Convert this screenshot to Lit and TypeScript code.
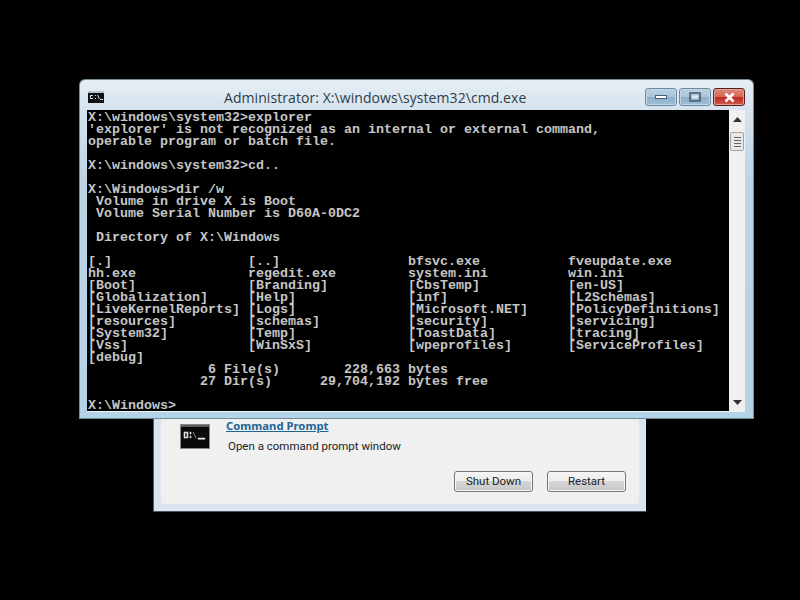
import { LitElement, html, css } from "lit";
import { customElement } from "lit/decorators.js";

const CONSOLE = `X:\\windows\\system32>explorer
'explorer' is not recognized as an internal or external command,
operable program or batch file.

X:\\windows\\system32>cd..

X:\\Windows>dir /w
 Volume in drive X is Boot
 Volume Serial Number is D60A-0DC2

 Directory of X:\\Windows

[.]                 [..]                bfsvc.exe           fveupdate.exe
hh.exe              regedit.exe         system.ini          win.ini
[Boot]              [Branding]          [CbsTemp]           [en-US]
[Globalization]     [Help]              [inf]               [L2Schemas]
[LiveKernelReports] [Logs]              [Microsoft.NET]     [PolicyDefinitions]
[resources]         [schemas]           [security]          [servicing]
[System32]          [Temp]              [ToastData]         [tracing]
[Vss]               [WinSxS]            [wpeprofiles]       [ServiceProfiles]
[debug]
               6 File(s)        228,663 bytes
              27 Dir(s)      29,704,192 bytes free

X:\\Windows>`;

@customElement("app-root")
export class AppRoot extends LitElement {
  static styles = css`
    :host { display: block; position: relative; width: 800px; height: 600px; background: #000; overflow: hidden; }
    .dialog {
      position: absolute; left: 153px; top: 412px; width: 493px; height: 100px; box-sizing: border-box;
      background: #dbe5f1; padding: 0 7px 7px 7px; display: flex;
      border-left: 1px solid #5a6066; border-bottom: 1px solid #4f5459;
    }
    .dialog-body {
      flex: 1; background: #f0f0f0; border-radius: 0 0 3px 3px; display: flex; flex-direction: column;
      padding: 7px 13px 0 19px;
    }
    .row { display: flex; gap: 16px; }
    .pic { margin-top: 5px; flex: none; }
    .link { font: bold 11.3px/14px "Noto Sans", sans-serif; color: #1f6496; text-decoration: underline; }
    .desc { font: 11.5px/14px Roboto, sans-serif; color: #1c1c1c; margin: 6px 0 0 2px; }
    .btns { display: flex; justify-content: flex-end; gap: 14px; margin-top: 18px; }
    .btn {
      width: 79px; height: 21px; box-sizing: border-box; border: 1px solid #777; border-radius: 3px;
      background: linear-gradient(#f4f4f4 0, #ededed 45%, #d6d6d6 50%, #c8c8c8 100%);
      font: 11.5px/19px Roboto, sans-serif; color: #222; text-align: center; box-shadow: inset 0 0 0 1px #f6f6f6;
    }
    .win {
      position: absolute; left: 79px; top: 79px; width: 675px; height: 340px; box-sizing: border-box;
      border-radius: 6px 6px 0 0; border: 1px solid #7b8c99; border-bottom-color: #6c8c9c;
      background: linear-gradient(#e6eef4 0, #d3e2ee 10%, #bdd3e4 30%, #b5d3e6 100%);
      padding: 0 8px 6px 7px; display: flex; flex-direction: column;
    }
    .title { height: 30px; flex: none; display: flex; align-items: flex-start; position: relative; }
    .ticon { margin: 11px 0 0 1px; }
    .ttext {
      position: absolute; left: 137px; top: 8px; font: 14px/20px "Open Sans", sans-serif;
      letter-spacing: 0.07px; color: #2f3c48; white-space: nowrap;
    }
    .caps { position: absolute; right: 0; top: 8px; display: flex; gap: 2px; }
    .cap {
      height: 18px; width: 32px; box-sizing: border-box; border: 1px solid #6c8aa5; border-radius: 3px; display: flex;
      align-items: center; justify-content: center; box-shadow: inset 0 0 0 1px #c4d6e4;
      background: linear-gradient(#b9d0e2 0, #a9c4d9 48%, #8fafc8 52%, #a0bfd6 100%);
    }
    .close { border-color: #5a2020; box-shadow: inset 0 0 0 1px #e0a098; background: linear-gradient(#e08878 0, #d5675a 48%, #bf2a20 52%, #cf5a48 100%); }
    .client { flex: 1; display: flex; min-height: 0; border-bottom: 1px solid #eef5fa; }
    .term {
      flex: 1; margin: 0; background: #000; color: #c6c6c6; white-space: pre;
      font: bold 13.33px/12px "Liberation Mono", monospace; padding: 2px 0 0 1px; height: 100%; box-sizing: border-box;
    }
    .sb { width: 16px; flex: none; background: #f0f0f0; display: flex; flex-direction: column; align-items: center; }
    .arrow { height: 17px; width: 16px; flex: none; display: flex; align-items: center; justify-content: center; }
    .arrow.up { margin-top: 1px; }
    .thumb {
      width: 14px; height: 19px; margin-top: 4px; box-sizing: border-box; border: 1px solid #a4a4a4; border-radius: 2px;
      background: #e8e8e8; display: flex; flex-direction: column; align-items: center; justify-content: center; gap: 2px;
    }
    .thumb i { display: block; width: 7px; height: 1px; background: #666; }
    .track { flex: 1; }
  `;

  render() {
    return html`
      <div class="dialog">
        <div class="dialog-body">
          <div class="row">
            <svg class="pic" width="30" height="25" viewBox="0 0 30 25">
              <rect x="0.5" y="0.5" width="29" height="24" fill="#0a0a0a" stroke="#8a8a8a"/>
              <rect x="1" y="1" width="28" height="2" fill="#5a5a5a"/>
              <path d="M4 8h4v1H4zM4 9v4h1V9zM4 13h4v1H4zM7 9h1v4H7zM10 8h1v2h-1zM10 12h1v2h-1zM13 8l3 6M18 14h7v1.2h-7z" stroke="#ddd" stroke-width="0.6" fill="#ddd"/>
            </svg>
            <div>
              <div class="link">Command Prompt</div>
              <div class="desc">Open a command prompt window</div>
            </div>
          </div>
          <div class="btns">
            <div class="btn">Shut Down</div>
            <div class="btn">Restart</div>
          </div>
        </div>
      </div>
      <div class="win">
        <div class="title">
          <svg class="ticon" width="16" height="12" viewBox="0 0 16 12">
            <rect width="16" height="12" fill="#111"/>
            <rect width="16" height="2" fill="#b8c4cc"/>
            <path d="M2 4h3v1H2zM2 5h1v2H2zM2 7h3v1H2zM7 4h1v1H7zM7 7h1v1H7zM9 4l2 4h1l-2-4zM12 8h3v1h-3z" fill="#ddd"/>
          </svg>
          <span class="ttext">Administrator: X:\\windows\\system32\\cmd.exe</span>
          <div class="caps">
            <div class="cap"><svg width="12" height="4"><rect x="0.5" y="0.5" width="11" height="3" fill="#fff" stroke="#4a5f72"/></svg></div>
            <div class="cap"><svg width="12" height="10"><rect x="1" y="1" width="10" height="8" fill="none" stroke="#3f5366" stroke-width="1.4"/><rect x="3" y="3.5" width="6" height="3" fill="#dfe9f1"/></svg></div>
            <div class="cap close"><svg width="13" height="11" viewBox="0 0 13 11"><path d="M2.5 1.5l8 8M10.5 1.5l-8 8" stroke="#fff" stroke-width="2.6"/></svg></div>
          </div>
        </div>
        <div class="client">
          <pre class="term">${CONSOLE}</pre>
          <div class="sb">
            <div class="arrow up"><svg width="9" height="5"><path d="M4.5 0L9 5H0z" fill="#333"/></svg></div>
            <div class="thumb"><i></i><i></i><i></i><i></i></div>
            <div class="track"></div>
            <div class="arrow"><svg width="9" height="5"><path d="M0 0h9L4.5 5z" fill="#333"/></svg></div>
          </div>
        </div>
      </div>
    `;
  }
}
